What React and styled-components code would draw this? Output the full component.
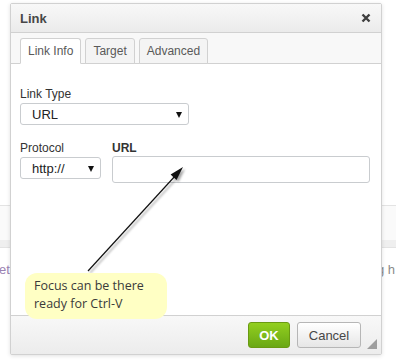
import React, { useState } from 'react';
import styled, { createGlobalStyle } from 'styled-components';

const GlobalStyle = createGlobalStyle`
  html, body {
    margin: 0;
    padding: 0;
    background: #fff;
    width: 396px;
    height: 360px;
    overflow: hidden;
  }
  * { box-sizing: border-box; }
`;

const Page = styled.div`
  position: relative;
  width: 396px;
  height: 360px;
  overflow: hidden;
  font-family: 'Liberation Sans', Arial, sans-serif;
`;

const BackdropBand = styled.div`
  margin-top: 205px;
  height: 43px;
  border-top: 1px solid #e3e3e3;
  border-bottom: 1px solid #e3e3e3;
  background: linear-gradient(#fafafa 0 34px, #efefef 34px);
`;

const BackdropLine = styled.div`
  display: flex;
  justify-content: space-between;
  margin-top: 14px;
  font-size: 13px;
  line-height: 16px;
  white-space: nowrap;
`;

const BackdropWord = styled.span`
  color: ${({ tone }) => tone};
  margin: ${({ shift }) => shift};
`;

const Dialog = styled.div`
  position: absolute;
  left: 10px;
  top: 3px;
  width: 372px;
  height: 352px;
  display: flex;
  flex-direction: column;
  background: #fff;
  border: 1px solid #d1d1d1;
  border-radius: 2px;
  box-shadow: 0 1px 4px rgba(0, 0, 0, 0.12);
`;

const TitleBar = styled.div`
  height: 29px;
  display: flex;
  align-items: center;
  justify-content: space-between;
  padding: 0 10px 0 9px;
  background: linear-gradient(#f8f8f8, #ebebeb);
  border-bottom: 1px solid #d1d1d1;
`;

const Title = styled.span`
  font-size: 13px;
  font-weight: bold;
  color: #474747;
`;

const CloseButton = styled.button`
  border: 0;
  padding: 0;
  background: none;
  width: 10px;
  height: 10px;
  display: flex;
  cursor: pointer;
`;

const TabBar = styled.div`
  height: 31px;
  display: flex;
  align-items: flex-end;
  gap: 4px;
  padding: 0 0 0 9px;
  background: #f8f8f8;
  border-bottom: 1px solid #d1d1d1;
`;

const Tab = styled.button`
  position: relative;
  height: 26px;
  margin-bottom: -1px;
  padding: 0 7px;
  font-family: 'Liberation Sans', Arial, sans-serif;
  font-size: 12px;
  color: #595959;
  background: ${({ active }) => (active ? '#fff' : '#f4f4f4')};
  border: 1px solid #d1d1d1;
  border-bottom: 1px solid ${({ active }) => (active ? '#fff' : '#d1d1d1')};
  border-radius: 3px 3px 0 0;
  cursor: pointer;
`;

const Body = styled.div`
  flex: 1;
  padding: 23px 11px 0 9px;
`;

const Field = styled.div`
  display: flex;
  flex-direction: column;
  gap: ${({ gap }) => gap || 2}px;
`;

const Label = styled.label`
  font-size: 12px;
  line-height: 14px;
  color: #333;
  font-weight: ${({ bold }) => (bold ? 'bold' : 'normal')};
`;

const Select = styled.div`
  position: relative;
  width: ${({ width }) => width}px;
  height: 22px;
  display: flex;
  align-items: center;
  padding-left: 11px;
  font-size: 13px;
  color: #222;
  background: #fff;
  border: 1px solid #c9cccf;
  border-radius: 3px;
`;

const Caret = styled.span`
  position: absolute;
  right: ${({ right }) => right}px;
  top: 8px;
  width: 0;
  height: 0;
  border-left: 3.5px solid transparent;
  border-right: 3.5px solid transparent;
  border-top: 6px solid #111;
`;

const Row = styled.div`
  display: flex;
  gap: 11px;
  margin-top: 16px;
`;

const TextInput = styled.input`
  width: 258px;
  height: 27px;
  margin-top: -1px;
  border: 1px solid #c9cccf;
  border-radius: 3px;
  background: #fff;
  outline: none;
`;

const Footer = styled.div`
  position: relative;
  height: 39px;
  display: flex;
  justify-content: flex-end;
  align-items: flex-start;
  gap: 7px;
  padding: 6px 20px 0 0;
  background: linear-gradient(#f8f8f8, #ececec);
  border-top: 1px solid #d1d1d1;
`;

const Button = styled.button`
  height: 26px;
  width: ${({ width }) => width}px;
  font-family: 'Liberation Sans', Arial, sans-serif;
  font-size: 13px;
  font-weight: ${({ primary }) => (primary ? 'bold' : 'normal')};
  color: ${({ primary }) => (primary ? '#fff' : '#474747')};
  background: ${({ primary }) =>
    primary ? 'linear-gradient(#92cf1f, #6aa815)' : 'linear-gradient(#ffffff, #e6e6e6)'};
  border: 1px solid ${({ primary }) => (primary ? '#6a9a12' : '#b6b6b6')};
  border-radius: 3px;
  cursor: pointer;
`;

const Grip = styled.span`
  position: absolute;
  right: 4px;
  bottom: 5px;
  width: 0;
  height: 0;
  border-left: 10px solid transparent;
  border-bottom: 10px solid #9e9e9e;
`;

const Callout = styled.div`
  position: absolute;
  left: 25px;
  top: 273px;
  width: 142px;
  height: 46px;
  padding: 4px 0 0 9px;
  background: #ffffc4;
  border-radius: 12px;
  font-family: 'Open Sans', 'Noto Sans', sans-serif;
  font-size: 12.5px;
  line-height: 18px;
  color: #3a3a3a;
`;

const Overlay = styled.svg`
  position: absolute;
  left: 0;
  top: 0;
  pointer-events: none;
`;

const App = () => {
  const [tab, setTab] = useState('info');

  return (
    <Page>
      <GlobalStyle />
      <BackdropBand />
      <BackdropLine>
        <BackdropWord tone="#9b82b3" shift="0 0 0 -1px">ett</BackdropWord>
        <BackdropWord tone="#8a8a8a" shift="0 1px 0 0">g h</BackdropWord>
      </BackdropLine>

      <Dialog>
        <TitleBar>
          <Title>Link</Title>
          <CloseButton aria-label="Close">
            <svg width="10" height="10" viewBox="0 0 10 10">
              <path d="M1.5 1.5 L8.5 8.5 M8.5 1.5 L1.5 8.5" stroke="#3f3f3f" strokeWidth="2.4" />
            </svg>
          </CloseButton>
        </TitleBar>

        <TabBar>
          <Tab active={tab === 'info'} onClick={() => setTab('info')}>Link Info</Tab>
          <Tab active={tab === 'target'} onClick={() => setTab('target')}>Target</Tab>
          <Tab active={tab === 'adv'} onClick={() => setTab('adv')}>Advanced</Tab>
        </TabBar>

        <Body>
          <Field>
            <Label>Link Type</Label>
            <Select width={169}>
              URL
              <Caret right={6} />
            </Select>
          </Field>
          <Row>
            <Field>
              <Label>Protocol</Label>
              <Select width={81}>
                http://
                <Caret right={6} />
              </Select>
            </Field>
            <Field gap={2}>
              <Label bold>URL</Label>
              <TextInput type="text" />
            </Field>
          </Row>
        </Body>

        <Footer>
          <Button primary width={42}>OK</Button>
          <Button width={64}>Cancel</Button>
          <Grip />
        </Footer>
      </Dialog>

      <Overlay width="396" height="360" viewBox="0 0 396 360">
        <g style={{ filter: 'drop-shadow(2px 2px 1.2px rgba(0,0,0,0.35))' }}>
          <line x1="88" y1="271" x2="176" y2="175" stroke="#111" strokeWidth="1.2" />
          <polygon points="183,167 176.5,180 170.6,174.6" fill="#111" />
        </g>
      </Overlay>

      <Callout>
        Focus can be there
        <br />
        ready for Ctrl-V
      </Callout>
    </Page>
  );
};

export default App;
